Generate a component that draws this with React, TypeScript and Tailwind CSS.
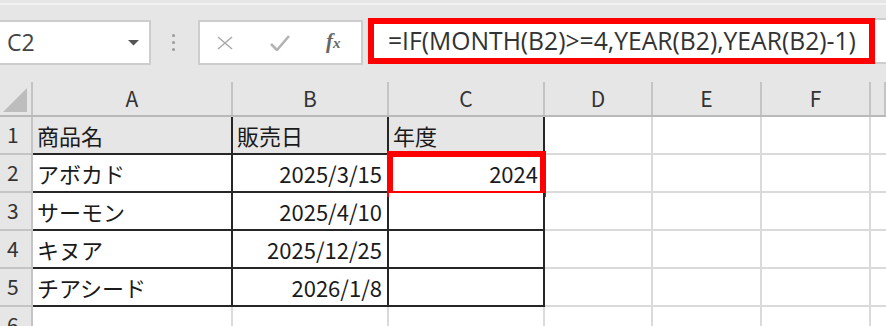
import React from "react";

const colW = [
  "w-[33px]",
  "w-[200px]",
  "w-[156px]",
  "w-[156px]",
  "w-[108px]",
  "w-[109px]",
  "w-[109px]",
  "flex-1",
];

const letters = ["", "A", "B", "C", "D", "E", "F", ""];

type Row = { n: string; a: string; b: string; c: string; head?: boolean; hl?: boolean };

const rows: Row[] = [
  { n: "1", a: "商品名", b: "販売日", c: "年度", head: true },
  { n: "2", a: "アボカド", b: "2025/3/15", c: "2024", hl: true },
  { n: "3", a: "サーモン", b: "2025/4/10", c: "" },
  { n: "4", a: "キヌア", b: "2025/12/25", c: "" },
  { n: "5", a: "チアシード", b: "2026/1/8", c: "" },
  { n: "6", a: "", b: "", c: "" },
];

const cellFont = { fontFamily: '"Noto Sans CJK JP", "Noto Sans", sans-serif' };

export default function App() {
  return (
    <div className="w-[886px] h-[326px] overflow-hidden bg-white select-none" style={cellFont}>
      {/* Toolbar */}
      <div className="h-[82px] bg-[#e6e6e6] flex flex-col">
        <div className="h-[3px]" />
        <div className="h-[2px] bg-[#f2f2f2]" />
        <div className="h-[15px]" />
        <div className="flex items-start">
          {/* Name box */}
          <div className="w-[151px] h-[45px] bg-white border-y-2 border-r-2 border-[#cdcdcd] flex items-center justify-between pl-[7px] pr-[10px] mt-0">
            <span
              className="text-[23px] text-[#444] leading-none"
              style={{ fontFamily: '"Open Sans", "Noto Sans", sans-serif' }}
            >
              C2
            </span>
            <svg width="11" height="6" viewBox="0 0 11 6">
              <path d="M0 0 L11 0 L5.5 5.5 Z" fill="#555" />
            </svg>
          </div>
          {/* dots */}
          <div className="w-[47px] h-[45px] flex flex-col items-center justify-center gap-[4px] pr-[3px]">
            <div className="w-[3px] h-[3px] rounded-full bg-[#9a9a9a]" />
            <div className="w-[3px] h-[3px] rounded-full bg-[#9a9a9a]" />
            <div className="w-[3px] h-[3px] rounded-full bg-[#9a9a9a]" />
          </div>
          {/* formula buttons */}
          <div className="w-[165px] h-[45px] bg-white border-2 border-[#cdcdcd] flex items-center">
            <div className="w-[17px]" />
            <svg width="16" height="14" viewBox="0 0 16 14">
              <path d="M1 1 L15 13 M15 1 L1 13" stroke="#ababab" strokeWidth="1.6" fill="none" />
            </svg>
            <div className="w-[37px]" />
            <svg width="20" height="16" viewBox="0 0 20 16">
              <path d="M1 9 L7 15 L19 1" stroke="#b3b3b3" strokeWidth="2.6" fill="none" />
            </svg>
            <div className="w-[36px]" />
            <span
              className="text-[21px] italic font-bold text-[#666] leading-none -mt-[2px]"
              style={{ fontFamily: '"Liberation Serif", "DejaVu Serif", serif' }}
            >
              f<span className="text-[15px]">x</span>
            </span>
          </div>
          <div className="w-[5px]" />
          {/* formula bar */}
          <div className="flex-1 h-[46px] -mt-[2px] bg-white border-y-2 border-[#cdcdcd] flex">
            <div className="w-[507px] h-[46px] -mt-[2px] border-[6px] border-[#ff0000] bg-white flex items-center pl-[14px]">
              <span
                className="text-[24.7px] text-[#333] leading-none whitespace-nowrap"
                style={{ fontFamily: '"Open Sans", "Noto Sans", sans-serif' }}
              >
                =IF(MONTH(B2)&gt;=4,YEAR(B2),YEAR(B2)-1)
              </span>
            </div>
          </div>
        </div>
      </div>

      {/* Column headers */}
      <div className="flex h-[35px] bg-[#e6e6e6] border-b-2 border-[#b9b9b9]">
        {letters.map((l, i) => (
          <div
            key={i}
            className={`${colW[i]} h-full border-r-2 border-[#c4c4c4] flex items-center justify-center text-[21px] text-[#333] relative`}
          >
            {i === 0 ? (
              <svg width="26" height="26" viewBox="0 0 26 26" className="absolute left-[2px] bottom-[2px]">
                <path d="M25 1 L25 25 L1 25 Z" fill="#bdbdbd" />
              </svg>
            ) : (
              l
            )}
          </div>
        ))}
      </div>

      {/* Rows */}
      {rows.map((r, ri) => {
        const inTable = ri < 5;
        const dark = "border-[#262626]";
        const light = "border-[#dadada]";
        return (
          <div key={ri} className="flex h-[38px]">
            <div
              className={`${colW[0]} h-full bg-[#e6e6e6] border-r-2 border-b-2 border-[#c4c4c4] flex items-center pl-[7px] text-[21px] text-[#333]`}
            >
              {r.n}
            </div>
            {/* A */}
            <div
              className={`${colW[1]} h-full border-r-2 border-b-2 ${inTable ? dark : light} ${
                r.head ? "bg-[#e7e6e6]" : "bg-white"
              } flex items-center pl-[4px] text-[22px] text-[#1a1a1a] whitespace-nowrap`}
            >
              {r.a}
            </div>
            {/* B */}
            <div
              className={`${colW[2]} h-full border-r-2 border-b-2 ${inTable ? dark : light} ${
                r.head ? "bg-[#e7e6e6] justify-start pl-[4px]" : "bg-white justify-end pr-[5px]"
              } flex items-center text-[22px] text-[#1a1a1a] whitespace-nowrap`}
            >
              {r.b}
            </div>
            {/* C */}
            <div
              className={`${colW[3]} h-full border-r-2 border-b-2 ${inTable ? dark : light} ${
                r.head ? "bg-[#e7e6e6] justify-start pl-[4px]" : "bg-white justify-end pr-[5px]"
              } flex items-center text-[22px] text-[#1a1a1a] whitespace-nowrap relative`}
            >
              {r.c}
              {r.hl && (
                <div className="absolute left-[-2px] top-[-4px] w-[159px] h-[46px] border-[6px] border-[#ff0000] pointer-events-none" />
              )}
            </div>
            <div className={`${colW[4]} h-full border-r-2 border-b-2 ${light}`} />
            <div className={`${colW[5]} h-full border-r-2 border-b-2 ${light}`} />
            <div className={`${colW[6]} h-full border-r-2 border-b-2 ${light}`} />
            <div className={`${colW[7]} h-full border-b-2 ${light}`} />
          </div>
        );
      })}
    </div>
  );
}
